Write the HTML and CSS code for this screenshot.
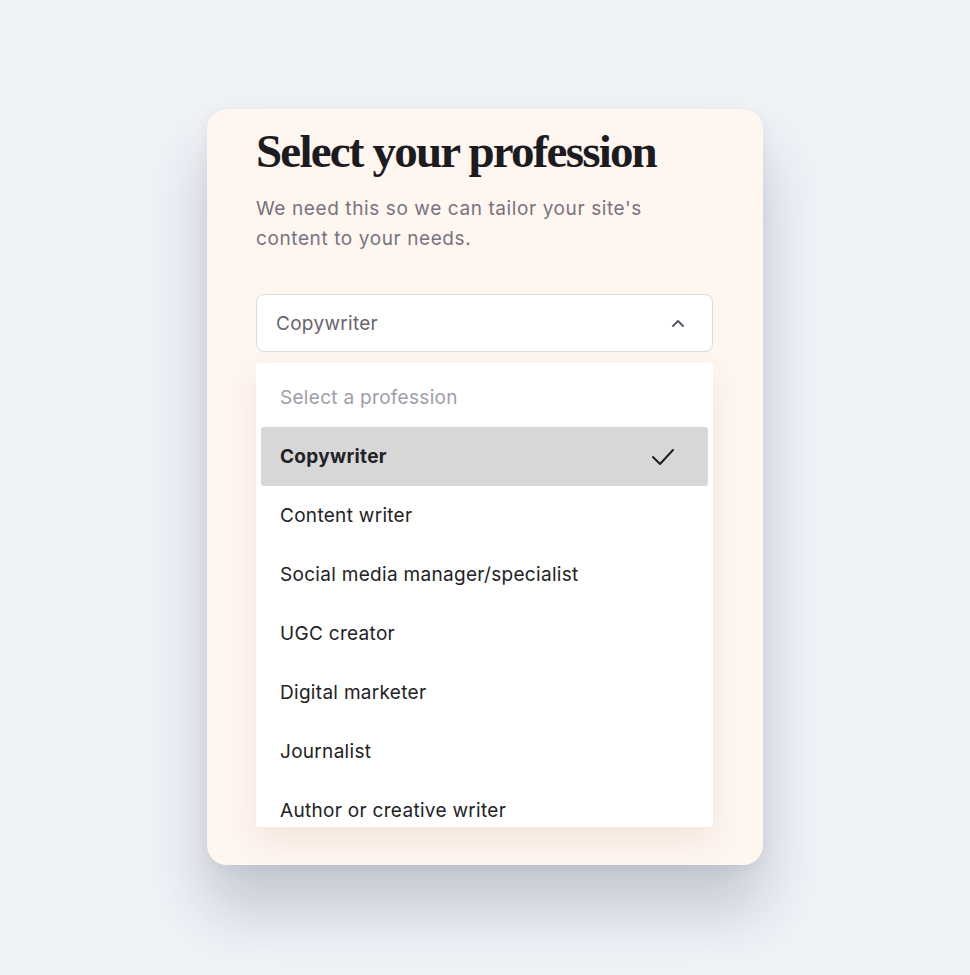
FILE: index.html
```html
<!DOCTYPE html>
<html lang="en">
<head>
  <meta charset="UTF-8">
  <meta name="viewport" content="width=device-width, initial-scale=1.0">
  <title>Select your profession</title>
  <link rel="stylesheet" href="styles.css">
</head>
<body>
  <div class="profession-card">
    <h1 class="title">Select your profession</h1>
    <p class="subtitle">We need this so we can tailor your site's content to your needs.</p>

    <div class="select-wrap">
      <!-- Select Trigger -->
      <div class="select-box">
        <span class="select-value">Copywriter</span>
        <svg class="chevron" width="16" height="10" viewBox="0 0 16 10">
          <path d="M3 8 L8 3 L13 8" fill="none" stroke="#5b5866" stroke-width="2" stroke-linecap="round" stroke-linejoin="round"/>
        </svg>
      </div>

      <!-- Dropdown Menu -->
      <ul class="dropdown">
        <li class="option placeholder">Select a profession</li>
        <li class="option selected">
          <span>Copywriter</span>
          <svg class="check" width="26" height="20" viewBox="0 0 26 20">
            <path d="M3 10 L10 17 L23 3" fill="none" stroke="#1f1f22" stroke-width="2" stroke-linecap="round" stroke-linejoin="round"/>
          </svg>
        </li>
        <li class="option">Content writer</li>
        <li class="option">Social media manager/specialist</li>
        <li class="option">UGC creator</li>
        <li class="option">Digital marketer</li>
        <li class="option">Journalist</li>
        <li class="option">Author or creative writer</li>
      </ul>
    </div>
  </div>
</body>
</html>
```

FILE: styles.css
```css
/* Page */
html {
  background: #eff2f7;
}

body {
  margin: 0;
  padding: 109px 0 110px;
  background: #eff2f7;
  font-family: Inter, "Noto Sans", sans-serif;
}

/* Card */
.profession-card {
  width: 556px;
  height: 756px;
  margin: 0 auto;
  padding: 14px 50px 0 49px;
  box-sizing: border-box;
  background: #fff6f0;
  border-radius: 20px;
  box-shadow: 0 44px 60px rgba(40, 50, 70, 0.22), 0 4px 14px rgba(40, 50, 70, 0.06);
}

.title {
  margin: 0;
  font-family: "Liberation Serif", serif;
  font-weight: 700;
  font-size: 47px;
  line-height: 56px;
  letter-spacing: -1.8px;
  color: #1c1b1f;
}

.subtitle {
  margin: 15px 0 0;
  width: 420px;
  font-size: 19px;
  line-height: 30px;
  letter-spacing: 0.6px;
  color: #77737f;
}

/* Select */
.select-wrap {
  position: relative;
  margin-top: 40px;
  width: 457px;
}

.select-box {
  height: 58px;
  box-sizing: border-box;
  display: flex;
  align-items: center;
  justify-content: space-between;
  padding: 0 26px 0 19px;
  background: #fff;
  border: 1px solid #dedbd9;
  border-radius: 8px;
}

.select-value {
  font-size: 19px;
  letter-spacing: 0.3px;
  color: #67646f;
}

.dropdown {
  position: absolute;
  top: 69px;
  left: 0;
  right: 0;
  height: 464px;
  overflow: hidden;
  margin: 0;
  padding: 4px 5px 0;
  list-style: none;
  background: #fff;
  border-radius: 3px;
  box-sizing: border-box;
  box-shadow: 0 14px 34px rgba(120, 90, 60, 0.10);
}

.option {
  height: 59px;
  display: flex;
  align-items: center;
  justify-content: space-between;
  padding: 0 32px 0 19px;
  font-size: 19px;
  letter-spacing: 0.3px;
  color: #222226;
  border-radius: 3px;
}

.option.placeholder {
  height: 60px;
  color: #a19ca9;
}

.option.selected {
  background: #d7d7d7;
  font-weight: 700;
}

.check {
  display: block;
}
```
